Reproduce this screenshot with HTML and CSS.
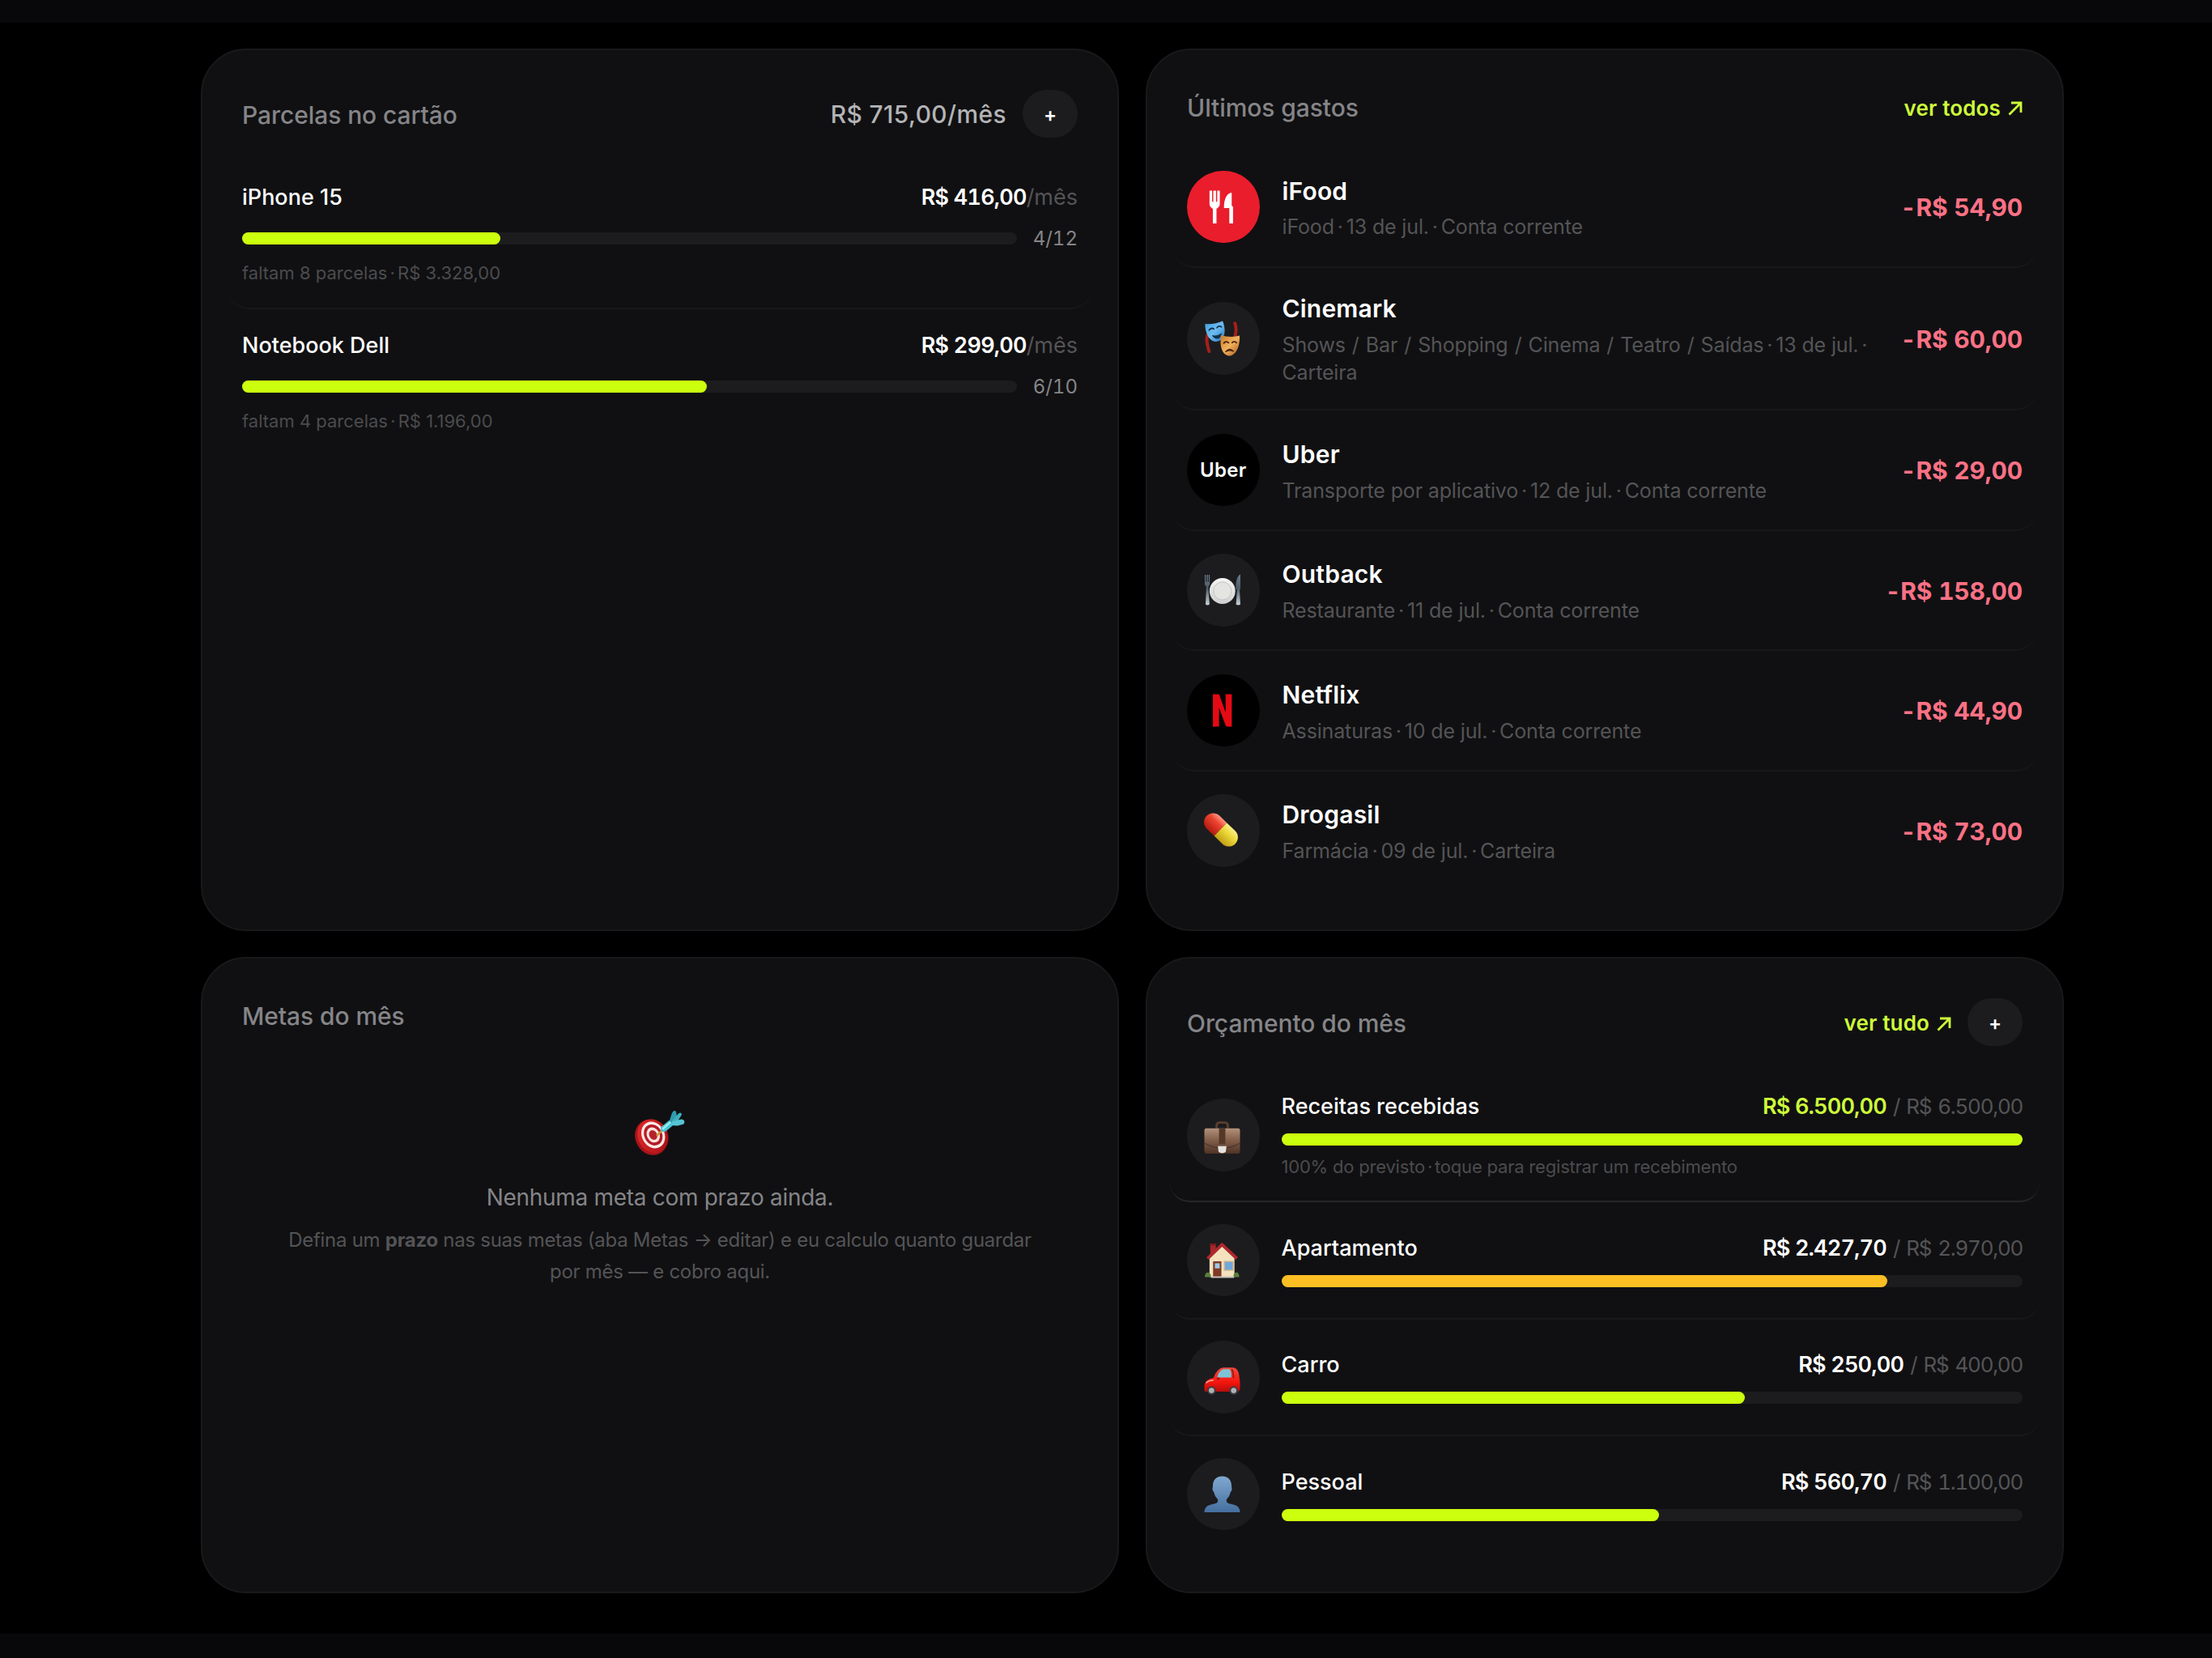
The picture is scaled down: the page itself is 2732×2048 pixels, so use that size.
FILE: index.html
```html
<!DOCTYPE html>
<html lang="pt-BR">
<head>
	<meta charset="utf-8" />
	<title>Finanças</title>
	<link rel="stylesheet" href="styles.css">
</head>
<body>
<main class="grid">

	<!-- parcelas -->
	<section class="card">
		<header class="card-head">
			<h2>Parcelas no cartão</h2>
			<span class="total">R$ 715,00/mês</span>
			<button type="button" class="add">+</button>
		</header>
		<div class="parcela">
			<div class="line"><span class="label">iPhone 15</span><span class="value"><b>R$ 416,00</b>/mês</span></div>
			<div class="progress">
				<div class="track"><div class="fill" style="width:33.33%"></div></div>
				<span class="count">4/12</span>
			</div>
			<p class="hint">faltam 8 parcelas <i>·</i> R$ 3.328,00</p>
		</div>
		<div class="parcela">
			<div class="line"><span class="label">Notebook Dell</span><span class="value"><b>R$ 299,00</b>/mês</span></div>
			<div class="progress">
				<div class="track"><div class="fill" style="width:60%"></div></div>
				<span class="count">6/10</span>
			</div>
			<p class="hint">faltam 4 parcelas <i>·</i> R$ 1.196,00</p>
		</div>
	</section>

	<!-- gastos -->
	<section class="card">
		<header class="card-head">
			<h2>Últimos gastos</h2>
			<a class="more">ver todos <svg class="arrow" viewBox="0 0 18 18"><path d="M1.5 16.5L15.5 2.5M4 2H16V14" /></svg></a>
		</header>
		<div class="gasto">
			<div class="avatar ifood">
				<svg class="ico" viewBox="0 0 46 46">
					<path fill="#fff" d="M7 2.5h3.3v14h1.5v-14h3.4v14h1.5v-14H20v16.300c0 3.500-2 5.700-4.200 6.400V44h-4.600V25.200C9 24.500 7 22.300 7 18.800z" />
					<path fill="#fff" d="M35 5v16.500l1.700 1.400V44H32V24.500h-6.700C25 15 28 5.500 35 5z" />
				</svg>
			</div>
			<div class="info"><h3>iFood</h3><p>iFood <i>·</i> 13 de jul. <i>·</i> Conta corrente</p></div>
			<span class="amount">-R$ 54,90</span>
		</div>
		<div class="gasto">
			<div class="avatar">
				<svg class="ico" viewBox="0 0 46 46">
					<defs>
						<linearGradient id="mb" x1="0" y1="0" x2="1" y2="1"><stop offset="0" stop-color="#3f9fe0" /><stop offset=".5" stop-color="#6dbcf0" /><stop offset="1" stop-color="#1f74bd" /></linearGradient>
						<linearGradient id="mo" x1="0" y1="0" x2="1" y2="1"><stop offset="0" stop-color="#c97a2c" /><stop offset=".5" stop-color="#f2b25e" /><stop offset="1" stop-color="#a9591b" /></linearGradient>
					</defs>
					<path d="M4.500 19C2 26 4.500 32 6.500 40" fill="none" stroke="#a51f1c" stroke-width="4" stroke-linecap="round" />
					<path d="M39 4.500C41.500 10 41 14 39.500 20" fill="none" stroke="#a51f1c" stroke-width="4" stroke-linecap="round" />
					<path fill="url(#mb)" d="M1.500 5C9 6 17 4.500 23.500 1.500C25.500 6 27.500 14 25 20.500C23 25.500 18 28 14 27.500C5 26 1 13 1.500 5z" />
					<path d="M6.500 13q2.500-3.500 6-1.500M16.500 10q2.500-3.500 5.500-1" fill="none" stroke="#12324d" stroke-width="1.800" stroke-linecap="round" />
					<path d="M10 19.500q7 1.500 12.500-3q-1 7-6 7.500q-4 0-6.500-4.500z" fill="#12324d" />
					<path fill="url(#mo)" d="M21.500 19.500C29 22 38 22 45 20C45.500 30 43 41 35 45C31 46.500 26 44 23.500 39.500C20.500 34 20.500 26 21.500 19.500z" />
					<path d="M25 29.500q3-3.500 6-.5M35.500 29q2.500-3 5.500 0" fill="none" stroke="#4b240b" stroke-width="1.800" stroke-linecap="round" />
					<path d="M27 40.500q5.500-6.500 10.500-.5q-5.500-3-10.500 .5z" fill="#4b240b" stroke="#4b240b" stroke-width="1.300" />
				</svg>
			</div>
			<div class="info"><h3>Cinemark</h3><p><span class="wide">Shows / Bar / Shopping / Cinema / Teatro / Saídas</span> <i>·</i> 13 de jul. <i>·</i> Carteira</p></div>
			<span class="amount">-R$ 60,00</span>
		</div>
		<div class="gasto">
			<div class="avatar black">Uber</div>
			<div class="info"><h3>Uber</h3><p>Transporte por aplicativo <i>·</i> 12 de jul. <i>·</i> Conta corrente</p></div>
			<span class="amount">-R$ 29,00</span>
		</div>
		<div class="gasto">
			<div class="avatar">
				<svg class="ico" viewBox="0 0 46 46">
					<defs>
						<linearGradient id="pl" x1="0" y1="0" x2="0" y2="1"><stop offset="0" stop-color="#f5f5f5" /><stop offset="1" stop-color="#cfcfd1" /></linearGradient>
						<linearGradient id="st" x1="0" y1="0" x2="0" y2="1"><stop offset="0" stop-color="#6c7c89" /><stop offset=".45" stop-color="#4d5b66" /><stop offset="1" stop-color="#c9d3da" /></linearGradient>
					</defs>
					<circle cx="23.300" cy="24.500" r="16.300" fill="url(#pl)" />
					<circle cx="23.300" cy="24.500" r="11.300" fill="#e4e4e1" stroke="#c4c4c4" stroke-width="1" />
					<path fill="url(#st)" d="M1 4h1.300v9h1.200V4h1.400v9H6V4h1.300v11c0 2-.8 3-1.800 3.600L7 41.500q-2.500 2-5 0L3 18.600C1.700 18 1 17 1 15z" />
					<path fill="url(#st)" d="M46 3.500V22.500h-1l1 19q-3 2-5.500 0l1.300-19h-1.500C40 14 41.500 5.500 46 3.500z" />
				</svg>
			</div>
			<div class="info"><h3>Outback</h3><p>Restaurante <i>·</i> 11 de jul. <i>·</i> Conta corrente</p></div>
			<span class="amount">-R$ 158,00</span>
		</div>
		<div class="gasto">
			<div class="avatar black">
				<svg class="ico" viewBox="0 0 46 46">
					<path fill="#e50914" d="M11.300 2.500h7.800l8.200 23V2.500h7.800v41.300q-3.700-.5-7.300-.7L19 19.500v23.700q-3.900 .1-7.700 .6z" />
				</svg>
			</div>
			<div class="info"><h3>Netflix</h3><p>Assinaturas <i>·</i> 10 de jul. <i>·</i> Conta corrente</p></div>
			<span class="amount">-R$ 44,90</span>
		</div>
		<div class="gasto">
			<div class="avatar">
				<svg class="ico" viewBox="0 0 46 46">
					<defs>
						<linearGradient id="pr" x1="0" y1="0" x2="0" y2="1"><stop offset="0" stop-color="#ff9a86" /><stop offset=".35" stop-color="#ee4531" /><stop offset="1" stop-color="#b3190f" /></linearGradient>
						<linearGradient id="py" x1="0" y1="0" x2="0" y2="1"><stop offset="0" stop-color="#fbf08a" /><stop offset=".4" stop-color="#ecd838" /><stop offset="1" stop-color="#c09e14" /></linearGradient>
					</defs>
					<g transform="rotate(44 22 23)">
						<path fill="url(#pr)" d="M20.500 11.500H7.500a11.500 11.500 0 0 0 0 23H20.500z" />
						<path fill="url(#py)" d="M20.500 11.500H35a11.500 11.500 0 0 1 0 23H20.500z" />
					</g>
				</svg>
			</div>
			<div class="info"><h3>Drogasil</h3><p>Farmácia <i>·</i> 09 de jul. <i>·</i> Carteira</p></div>
			<span class="amount">-R$ 73,00</span>
		</div>
	</section>

	<!-- metas -->
	<section class="card">
		<header class="card-head">
			<h2>Metas do mês</h2>
		</header>
		<div class="empty">
			<svg class="target" viewBox="0 0 62 56">
				<defs>
					<linearGradient id="tg" x1="0" y1="0" x2="1" y2="1"><stop offset="0" stop-color="#e32b2b" /><stop offset="1" stop-color="#a30f16" /></linearGradient>
				</defs>
				<g transform="rotate(-28 21 33)">
					<ellipse cx="20" cy="33.500" rx="19.500" ry="22.500" fill="#a8141a" />
					<ellipse cx="22.500" cy="33" rx="18.500" ry="21.500" fill="url(#tg)" />
					<ellipse cx="23.500" cy="32" rx="14" ry="17" fill="#fbe9e4" />
					<ellipse cx="23.500" cy="32" rx="11" ry="13.500" fill="#b31b26" />
					<ellipse cx="23.500" cy="32" rx="7.800" ry="9.800" fill="#fbe3dc" />
					<ellipse cx="23.500" cy="32" rx="4.800" ry="6.300" fill="#b5222c" />
				</g>
				<path d="M27 32L34 25" stroke="#c9963c" stroke-width="2.500" />
				<path fill="#45c3d2" d="M32 21.500L43 12.500L48.500 18L39.500 25.500Q35 29 32.500 25.500z" />
				<path fill="#2f9bad" d="M42.500 14.500L45.500 5Q48 -1 51 2L52 8L48.500 17z" />
				<path fill="#3fb0c0" d="M46 13.500L54 4.500Q57.500 2 58 6L53.500 13z" />
				<path fill="#54c5d2" d="M46 14L58 11.500Q63 13 60.500 17.500L53 19.500Q48 20 45 18z" />
				<path fill="#9aebf0" d="M33.500 22.500L43.500 14L45 16L35 25z" />
			</svg>
			<p class="empty-title">Nenhuma meta com prazo ainda.</p>
			<p class="empty-text">Defina um <b>prazo</b> nas suas metas (aba Metas → editar) e eu calculo quanto guardar<br>por mês — e cobro aqui.</p>
		</div>
	</section>

	<!-- orcamento -->
	<section class="card">
		<header class="card-head">
			<h2>Orçamento do mês</h2>
			<a class="more">ver tudo <svg class="arrow" viewBox="0 0 18 18"><path d="M1.5 16.5L15.5 2.5M4 2H16V14" /></svg></a>
			<button type="button" class="add">+</button>
		</header>
		<div class="item income">
			<div class="avatar">
				<svg class="ico" viewBox="0 0 46 46">
					<defs>
						<linearGradient id="bc" x1="0" y1="0" x2="0" y2="1"><stop offset="0" stop-color="#b3917b" /><stop offset=".45" stop-color="#84614c" /><stop offset="1" stop-color="#4e3326" /></linearGradient>
					</defs>
					<path d="M16 14V10Q16 6.800 20 6.800H26Q30 6.800 30 10V14" fill="none" stroke="#5b3d2e" stroke-width="3" />
					<rect x=".5" y="14" width="45" height="32" rx="2.500" fill="url(#bc)" />
					<path d="M1 33Q10 38 17 38.500H29Q36 38 45 33" fill="none" stroke="#422a1e" stroke-width="1.300" opacity=".7" />
					<path d="M19 14h8v20h-8z" fill="#553828" />
					<path d="M17.500 36.500h11L27.500 44q-4.500 3-9 0z" fill="#e6e2de" />
				</svg>
			</div>
			<div class="body">
				<div class="line"><span class="label">Receitas recebidas</span><span class="value"><b>R$ 6.500,00</b> / R$ 6.500,00</span></div>
				<div class="track"><div class="fill" style="width:100%"></div></div>
				<p class="hint">100% do previsto <i>·</i> toque para registrar um recebimento</p>
			</div>
		</div>
		<div class="item">
			<div class="avatar">
				<svg class="ico" viewBox="0 0 46 46">
					<path fill="#a5282b" d="M8 3h7v12H8z" />
					<path fill="#7c1a1f" d="M7.500 2h8v2.500h-8z" />
					<path fill="#f4e2bf" d="M7 44.500V20L22.500 4.500L38.500 20V44.500z" />
					<path d="M4.500 21L22.800 3.500L41.500 21" fill="none" stroke="#b0282e" stroke-width="4" />
					<path fill="#7d3b25" d="M11.500 24.500h10.500v20H11.500z" />
					<path fill="#9cc9e8" d="M13.800 27h6v6.500h-6z" />
					<path fill="#c9b48d" d="M25 24h12.500v12.500H25z" />
					<path fill="#6fa9dc" d="M26.500 25.500h9.500v9.500h-9.500z" />
					<path fill="#57803a" d="M1 44.500q0-6 4.500-6q3 .5 3.500 6zM37 44.500q.5-6 4-6q3.500 0 3.500 6z" />
					<path fill="#c8c3bb" d="M9 43.500h29v2H9z" />
				</svg>
			</div>
			<div class="body">
				<div class="line"><span class="label">Apartamento</span><span class="value"><b>R$ 2.427,70</b> / R$ 2.970,00</span></div>
				<div class="track"><div class="fill warn" style="width:81.74%"></div></div>
			</div>
		</div>
		<div class="item">
			<div class="avatar">
				<svg class="ico" viewBox="0 0 46 46">
					<defs>
						<linearGradient id="cr" x1="0" y1="0" x2="0" y2="1"><stop offset="0" stop-color="#f04a3c" /><stop offset=".6" stop-color="#f5160f" /><stop offset="1" stop-color="#b50d0b" /></linearGradient>
					</defs>
					<path fill="url(#cr)" d="M.5 40V33Q3 26 12 24.500Q16 13 24 11.500H36Q42 11.500 44 19L45.500 30V38Q45 42 41 42H3Q.5 42 .5 40z" />
					<path fill="#7fc4d6" d="M16.500 24Q19 15 24.500 13.500L32.500 13.500Q35 17 34.500 24z" />
					<path d="M35 13.500Q37.500 17 37.300 24.500" fill="none" stroke="#8f1412" stroke-width="1.500" />
					<path d="M2.500 31Q6 27.500 12 27.500" fill="none" stroke="#ff9a8c" stroke-width="1.600" />
					<circle cx="18" cy="25.500" r="1.800" fill="#a3120f" />
					<circle cx="9.500" cy="40.500" r="5.400" fill="#3c3c40" /><circle cx="9.500" cy="40.500" r="3.400" fill="#aeb2b6" />
					<circle cx="37.500" cy="40.500" r="5.400" fill="#3c3c40" /><circle cx="37.500" cy="40.500" r="3.400" fill="#aeb2b6" />
				</svg>
			</div>
			<div class="body">
				<div class="line"><span class="label">Carro</span><span class="value"><b>R$ 250,00</b> / R$ 400,00</span></div>
				<div class="track"><div class="fill" style="width:62.5%"></div></div>
			</div>
		</div>
		<div class="item">
			<div class="avatar">
				<svg class="ico" viewBox="0 0 46 46">
					<defs>
						<linearGradient id="ps" x1="0" y1="0" x2="0" y2="1"><stop offset="0" stop-color="#80a8d0" /><stop offset="1" stop-color="#456f9e" /></linearGradient>
					</defs>
					<path fill="url(#ps)" d="M23 .5C30 .5 35 5 34.800 13L35.300 17Q34.800 19.500 33.800 20Q32.500 26 28.500 30Q27.800 34 32 35L38 36.500Q45.500 38.500 45.500 46H.5Q.5 38.500 8 36.500L14 35Q18.200 34 17.500 30Q13.500 26 12.200 20Q11.200 19.500 10.700 17L11.200 13C11 5 16 .5 23 .5z" />
				</svg>
			</div>
			<div class="body">
				<div class="line"><span class="label">Pessoal</span><span class="value"><b>R$ 560,70</b> / R$ 1.100,00</span></div>
				<div class="track"><div class="fill" style="width:50.97%"></div></div>
			</div>
		</div>
	</section>

</main>
</body>
</html>
```
FILE: styles.css
```css
* {
	box-sizing: border-box;
	margin: 0;
	padding: 0;
}

body {
	font-family: Inter, "Liberation Sans", sans-serif;
	background: #08080a;
	color: #fff;
	padding: 28px 0 30px;
}

.grid {
	height: 1990px;
	background: #000;
	padding: 32px 183px 0 248px;
	display: grid;
	grid-template-columns: 1134px 1134px;
	grid-template-rows: 1090px 786px;
	gap: 32px 33px;
}

.card {
	background: #101012;
	border: 2px solid #19191b;
	border-radius: 56px;
	padding: 49px;
}

.card-head {
	display: flex;
	align-items: center;
	min-height: 42px;
	margin-bottom: 29px;
}

.card-head h2 {
	flex: 1;
	font-size: 30px;
	font-weight: 500;
	line-height: 40px;
	padding-top: 2px;
	letter-spacing: -.08px;
	color: #858588;
}

.total {
	font-size: 30px;
	font-weight: 500;
	letter-spacing: .35px;
	padding-top: 1px;
	color: #b4b4b6;
}

.more {
	display: flex;
	align-items: center;
	gap: 9px;
	padding-top: 2px;
	font-size: 26px;
	font-weight: 600;
	letter-spacing: .15px;
	color: #cdfc3a;
}

.arrow {
	width: 18px;
	height: 18px;
	margin-top: 2px;
	fill: none;
	stroke: #cdfc3a;
	stroke-width: 2.8;
}

.add {
	width: 68px;
	height: 59px;
	margin-left: 20px;
	padding-top: 2px;
	border: 0;
	border-radius: 30px;
	background: #1c1c1e;
	color: #fff;
	font: 600 24px/57px Inter, sans-serif;
	text-align: center;
}

/* thin line under the row, bent at the corners */
.parcela, .gasto, .item {
	margin: 0 -19px;
	border-bottom: 2px solid #18181a;
	border-radius: 28px;
}

.parcela:last-child, .gasto:last-child, .item:last-child {
	border-bottom-color: transparent;
}

.parcela {
	padding: 26px 19px 27px;
}

.line {
	display: flex;
	justify-content: space-between;
	font-size: 27px;
	line-height: 34px;
	padding-top: 2px;
}

.label {
	font-weight: 500;
}

.value {
	color: #545456;
	font-size: 26px;
	letter-spacing: -1.3px;
	word-spacing: 2.5px;
	font-variant-numeric: tabular-nums;
}

.value b {
	font-size: 27px;
	font-weight: 600;
	letter-spacing: -.8px;
	word-spacing: 0;
	color: #fff;
}

.parcela .value {
	font-size: 27px;
	letter-spacing: 0;
}

.progress {
	display: flex;
	align-items: center;
	gap: 20px;
	height: 34px;
	margin: 16px 0 8px;
}

.track {
	flex: 1;
	height: 15px;
	border-radius: 8px;
	background: #1c1c1e;
}

.fill {
	height: 15px;
	border-radius: 8px;
	background: #ccff0e;
}

.fill.warn {
	background: #fbbf24;
}

.count {
	font-size: 24px;
	color: #858588;
	font-variant-numeric: tabular-nums;
}

.hint {
	font-size: 22px;
	line-height: 32px;
	padding-top: 2px;
	color: #4b4b4d;
}

/* separator dot, tighter than a normal one */
i {
	font-style: normal;
	margin: 0 -3px;
}

/* gastos */
.gasto {
	display: flex;
	align-items: center;
	padding: 28.5px 19px;
}

.avatar {
	flex: none;
	width: 89.5px;
	height: 89.5px;
	border-radius: 50%;
	background: #1c1c1e;
	display: flex;
	align-items: center;
	justify-content: center;
	font-size: 24px;
	font-weight: 600;
	letter-spacing: .3px;
}

.avatar.ifood {
	background: #ea1d2c;
}

.avatar.black {
	background: #000;
}

.ico {
	width: 45px;
	height: 45px;
	margin-right: 2px;
}

.info {
	flex: 1;
	margin: 1px 24px -1px 28px;
}

.info h3 {
	font-size: 30px;
	font-weight: 600;
	line-height: 42px;
	letter-spacing: .2px;
	margin-bottom: 6.7px;
}

.info p {
	font-size: 25px;
	line-height: 34.5px;
	letter-spacing: -.15px;
	color: #545456;
}

.wide {
	word-spacing: 1.2px;
}

.amount {
	padding-top: 2px;
	font-size: 30px;
	font-weight: 700;
	letter-spacing: -.2px;
	color: #fb7185;
	font-variant-numeric: tabular-nums;
}

/* metas */
.empty {
	text-align: center;
	padding-top: 67px;
}

.target {
	display: block;
	width: 62px;
	height: 56px;
	margin: 0 auto;
}

.empty-title {
	margin-top: 32px;
	font-size: 28px;
	line-height: 40px;
	letter-spacing: -.3px;
	color: #858588;
}

.empty-text {
	margin-top: 13px;
	font-size: 24px;
	line-height: 39px;
	letter-spacing: -.28px;
	color: #545456;
}

/* orcamento */
.item {
	display: flex;
	align-items: center;
	gap: 27px;
	padding: 26.5px 21px;
	margin: 0 -21px;
	border-radius: 24px;
}

.item.income {
	border-bottom-color: #262628;
}

.income b {
	color: #cdfc3a;
}

.body {
	flex: 1;
}

.body .track {
	margin-top: 16px;
}

.body .hint {
	margin-top: 8px;
	letter-spacing: -.2px;
}
```
